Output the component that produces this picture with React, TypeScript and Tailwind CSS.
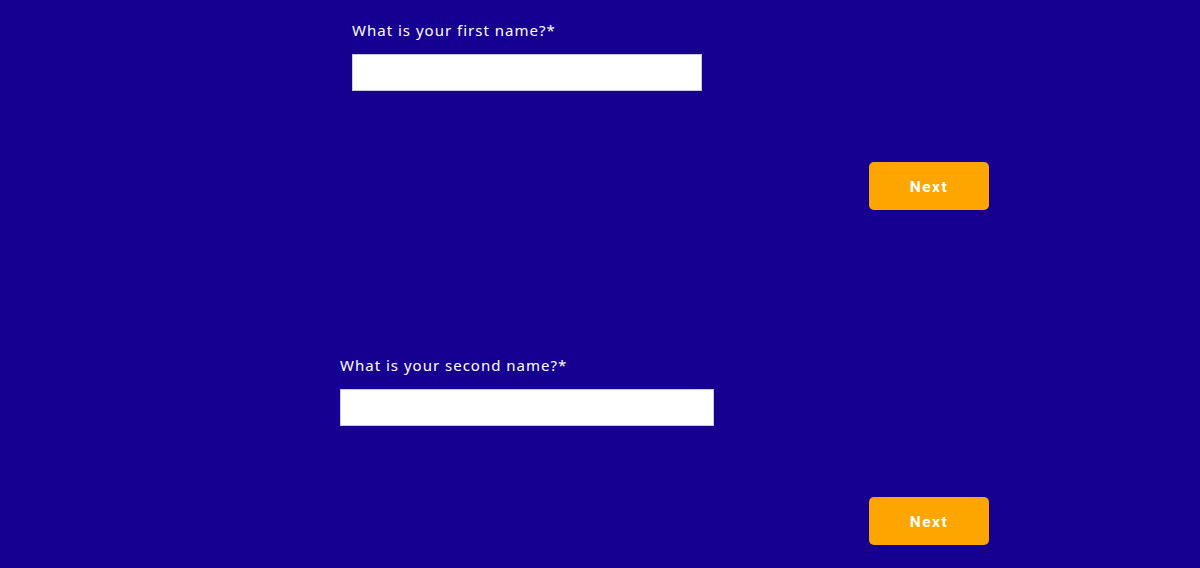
import React from "react"

interface StepProps {
    label: string
    width: string
}

function Step({ label, width }: StepProps) {
    return (
        <section className="h-[335px] shrink-0">
            <div className="w-[1054px] flex flex-col items-center pt-[18px]">
                <div className={width}>
                    <label className="block text-[15px] leading-6 tracking-[1px] text-white font-['Noto_Sans',sans-serif]">
                        {label}
                    </label>
                    <input
                        type="text"
                        className="mt-[12px] block w-full h-[37px] bg-white border border-[#c9c6e0] outline-none"
                    />
                </div>
            </div>
            <div className="w-[989px] flex justify-end mt-[71px]">
                <button className="w-[120px] h-[48px] pt-[3px] rounded-[5px] bg-[#ffa500] text-white font-bold text-[15.5px] tracking-[1.5px] font-['Roboto',sans-serif]">
                    Next
                </button>
            </div>
        </section>
    )
}

export default function App() {
    return (
        <main className="h-[568px] flex flex-col bg-[#160092] overflow-hidden">
            <Step label="What is your first name?*" width="w-[350px]" />
            <Step label="What is your second name?*" width="w-[374px]" />
        </main>
    )
}
